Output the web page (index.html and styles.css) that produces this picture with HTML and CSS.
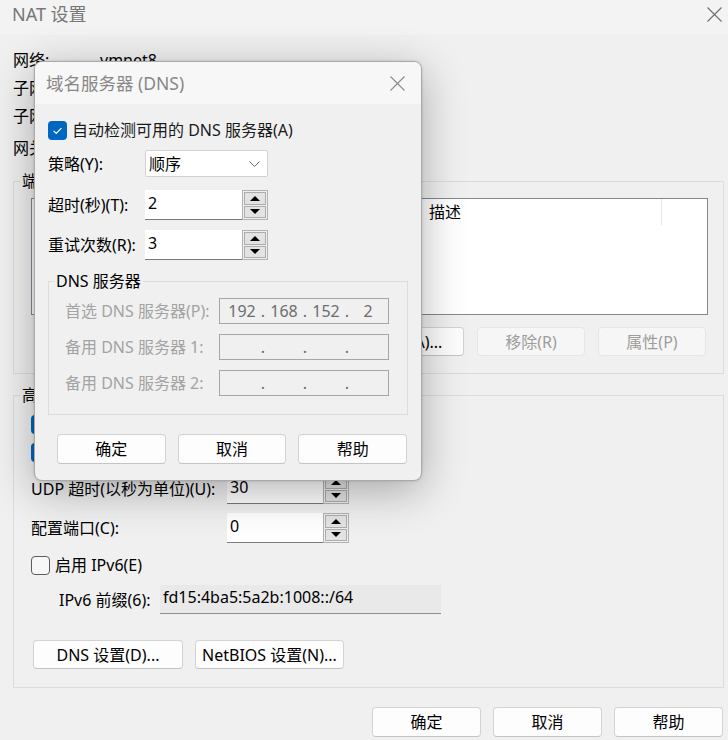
FILE: index.html
```html
<!DOCTYPE html>
<html lang="zh-CN">
<head>
    <meta charset="UTF-8">
    <meta name="viewport" content="width=device-width, initial-scale=1.0">
    <title>NAT 设置</title>
    <link rel="stylesheet" href="styles.css">
</head>
<body>
<div class="window">

    <div class="titlebar">
        <span class="title">NAT 设置</span>
        <svg class="close" width="15" height="15" viewBox="0 0 15 15">
            <path d="M0.5 0.5 L14.5 14.5 M14.5 0.5 L0.5 14.5" stroke="#6e6e6e" stroke-width="1.1" fill="none"/>
        </svg>
    </div>

    <div class="content">
        <!-- values of the lower rows sit under the DNS dialog -->
        <div class="info">
            <div class="info-row"><span class="info-label">网络:</span><span>vmnet8</span></div>
            <div class="info-row"><span class="info-label">子网 IP:</span></div>
            <div class="info-row"><span class="info-label">子网掩码:</span></div>
            <div class="info-row gap"><span class="info-label">网关 IP(G):</span></div>
        </div>

        <fieldset class="group ports">
            <legend>端口转发(F)</legend>
            <div class="list">
                <div class="list-head">
                    <span class="col col-port"></span>
                    <span class="col col-type"></span>
                    <span class="col col-ip"></span>
                    <span class="col col-desc">描述</span>
                </div>
            </div>
            <div class="btn-row">
                <button class="btn">添加(A)...</button>
                <button class="btn" disabled>移除(R)</button>
                <button class="btn" disabled>属性(P)</button>
            </div>
        </fieldset>

        <fieldset class="group advanced">
            <legend>高级</legend>
            <div class="check">
                <span class="box on"><svg width="19" height="19" viewBox="0 0 19 19"><path d="M5.6 9.9 L8.2 12.3 L13.4 7.1" stroke="#fff" stroke-width="1.2" fill="none"/></svg></span>
            </div>
            <div class="check second">
                <span class="box on"><svg width="19" height="19" viewBox="0 0 19 19"><path d="M5.6 9.9 L8.2 12.3 L13.4 7.1" stroke="#fff" stroke-width="1.2" fill="none"/></svg></span>
            </div>
            <div class="field udp">
                <span class="field-label">UDP 超时(以秒为单位)(U):</span>
                <div class="spin-edit">
                    <span class="spin-value">30</span>
                    <span class="spin"><span class="spin-btn"><i class="arrow-up"></i></span><span class="spin-btn"><i class="arrow-down"></i></span></span>
                </div>
            </div>
            <div class="field port">
                <span class="field-label">配置端口(C):</span>
                <div class="spin-edit">
                    <span class="spin-value">0</span>
                    <span class="spin"><span class="spin-btn"><i class="arrow-up"></i></span><span class="spin-btn"><i class="arrow-down"></i></span></span>
                </div>
            </div>
            <div class="check ipv6">
                <span class="box"></span>
                启用 IPv6(E)
            </div>
            <div class="field prefix">
                <span class="prefix-label">IPv6 前缀(6):</span>
                <span class="prefix-value">fd15:4ba5:5a2b:1008::/64</span>
            </div>
            <div class="setting-btns">
                <button class="btn dns-btn">DNS 设置(D)...</button>
                <button class="btn netbios-btn">NetBIOS 设置(N)...</button>
            </div>
        </fieldset>

        <div class="footer">
            <button class="btn">确定</button>
            <button class="btn">取消</button>
            <button class="btn">帮助</button>
        </div>
    </div>

    <!-- DNS dialog on top of the NAT window -->
    <div class="dialog">
        <div class="dialog-titlebar">
            <span class="dialog-title">域名服务器 (DNS)</span>
            <svg width="15" height="15" viewBox="0 0 15 15">
                <path d="M0.5 0.5 L14.5 14.5 M14.5 0.5 L0.5 14.5" stroke="#8a8a8a" stroke-width="1.1" fill="none"/>
            </svg>
        </div>
        <div class="dialog-body">
            <div class="check auto">
                <span class="box on"><svg width="19" height="19" viewBox="0 0 19 19"><path d="M5.6 9.9 L8.2 12.3 L13.4 7.1" stroke="#fff" stroke-width="1.2" fill="none"/></svg></span>
                自动检测可用的 DNS 服务器(A)
            </div>
            <div class="drow policy">
                <span class="drow-label">策略(Y):</span>
                <div class="select">
                    <span>顺序</span>
                    <svg width="11" height="6" viewBox="0 0 11 6"><path d="M0.5 0.5 L5.5 5.5 L10.5 0.5" stroke="#6a6a6a" stroke-width="1" fill="none"/></svg>
                </div>
            </div>
            <div class="drow timeout">
                <span class="drow-label">超时(秒)(T):</span>
                <div class="spin-edit">
                    <span class="spin-value">2</span>
                    <span class="spin"><span class="spin-btn"><i class="arrow-up"></i></span><span class="spin-btn"><i class="arrow-down"></i></span></span>
                </div>
            </div>
            <div class="drow retry">
                <span class="drow-label">重试次数(R):</span>
                <div class="spin-edit">
                    <span class="spin-value">3</span>
                    <span class="spin"><span class="spin-btn"><i class="arrow-up"></i></span><span class="spin-btn"><i class="arrow-down"></i></span></span>
                </div>
            </div>

            <fieldset class="group servers">
                <legend>DNS 服务器</legend>
                <div class="ip-row">
                    <span class="ip-label">首选 DNS 服务器(P):</span>
                    <span class="ip-box"><span class="seg">192</span><span class="dot">.</span><span class="seg">168</span><span class="dot">.</span><span class="seg">152</span><span class="dot">.</span><span class="seg">2</span></span>
                </div>
                <div class="ip-row">
                    <span class="ip-label">备用 DNS 服务器 1:</span>
                    <span class="ip-box"><span class="seg"></span><span class="dot">.</span><span class="seg"></span><span class="dot">.</span><span class="seg"></span><span class="dot">.</span><span class="seg"></span></span>
                </div>
                <div class="ip-row">
                    <span class="ip-label">备用 DNS 服务器 2:</span>
                    <span class="ip-box"><span class="seg"></span><span class="dot">.</span><span class="seg"></span><span class="dot">.</span><span class="seg"></span><span class="dot">.</span><span class="seg"></span></span>
                </div>
            </fieldset>

            <div class="dialog-btns">
                <button class="btn">确定</button>
                <button class="btn">取消</button>
                <button class="btn">帮助</button>
            </div>
        </div>
    </div>

</div>
</body>
</html>
```

FILE: styles.css
```css
* {
    box-sizing: border-box;
}
body {
    margin: 0;
    width: 728px;
    height: 740px;
    overflow: hidden;
    background-color: #f0f0f0;
    font-family: "Noto Sans", "Noto Sans CJK SC", sans-serif;
    font-size: 16px;
    line-height: 20px;
    color: #000;
}
.window {
    position: relative;
    height: 740px;
}

/* Main window title */
.titlebar {
    height: 35px;
    background-color: #f3f3f3;
    display: flex;
    justify-content: space-between;
    align-items: flex-start;
    padding: 4px 6px 0 12px;
}
.title {
    font-size: 18px;
    color: #777;
}
.titlebar .close {
    margin-top: 3px;
}

.content {
    padding: 11px 4px 0 13px;
}
.info-row {
    display: flex;
    align-items: center;
    height: 28px;
}
.info-row.gap {
    margin-top: 4px;
}
.info-label {
    width: 87px;
}

/* Group boxes */
.group {
    margin: 0;
    min-width: 0;
    border: 1px solid #dcdcdc;
    padding: 7px 15px 17px 17px;
}
.group legend {
    padding: 0 2px;
    margin-left: -11px;
    line-height: 20px;
}
.ports {
    margin-top: 9px;
}
.list {
    height: 117px;
    background-color: #fff;
    border: 1px solid #828790;
}
.list-head {
    display: flex;
    height: 26px;
}
.col {
    display: flex;
    align-items: center;
}
.col-port { width: 100px; }
.col-type { width: 90px; }
.col-ip { width: 207px; }
.col-desc {
    width: 233px;
    border-right: 1px solid #e5e5e5;
}
.btn-row {
    display: flex;
    justify-content: flex-end;
    gap: 13px;
    margin-top: 12px;
    padding-right: 2px;
}
.btn-row .btn {
    width: 108px;
    height: 29px;
}

/* Buttons */
.btn {
    font-family: inherit;
    font-size: 16px;
    color: #000;
    background-color: #fdfdfd;
    border: 1px solid #d3d3d3;
    border-bottom-color: #c4c4c4;
    border-radius: 4px;
    padding: 0;
    line-height: 20px;
}
.btn:disabled {
    color: #9d9d9d;
    background-color: #f6f6f6;
    border-color: #e6e6e6;
}

/* Advanced group */
.advanced {
    margin-top: 11px;
    padding-top: 9px;
    padding-bottom: 18px;
}
.check {
    display: flex;
    align-items: center;
    gap: 5px;
    height: 20px;
}
.check.second {
    margin-top: 8px;
}
.box {
    width: 19px;
    height: 19px;
    border-radius: 4px;
    border: 1px solid #5c5c5c;
    background-color: #f7f7f7;
    flex-shrink: 0;
}
.box.on {
    border: none;
    background-color: #0067c0;
}
.box svg {
    display: block;
}
.field {
    display: flex;
    align-items: center;
    height: 30px;
}
.field.udp { margin-top: 12px; }
.field.port { margin-top: 9px; }
.check.ipv6 { margin-top: 12px; }
.field.prefix {
    margin-top: 10px;
    height: 29px;
}
.field-label {
    width: 196px;
}

.spin-edit {
    display: flex;
    height: 30px;
}
.spin-value {
    width: 96px;
    height: 100%;
    background-color: #fff;
    border-bottom: 1px solid #7a7a7a;
    padding: 3px 3px 0;
}
.spin {
    width: 26px;
    height: 100%;
    border: 1px solid #b2b2b2;
    padding: 1px;
    display: grid;
    grid-template-rows: 1fr 1fr;
    gap: 1px;
}
.spin-btn {
    background-color: #e3e3e3;
    border: 1px solid #adadad;
    display: flex;
    align-items: center;
    justify-content: center;
}
.arrow-up {
    border-left: 5px solid transparent;
    border-right: 5px solid transparent;
    border-bottom: 5px solid #000;
}
.arrow-down {
    border-left: 5px solid transparent;
    border-right: 5px solid transparent;
    border-top: 5px solid #000;
}

.prefix-label {
    width: 129px;
    padding-left: 28px;
}
.prefix-value {
    width: 281px;
    height: 100%;
    background-color: #e9e9e9;
    border-bottom: 1px solid #8d8d8d;
    padding: 2px 3px 0;
}
.setting-btns {
    display: flex;
    gap: 12px;
    margin-top: 26px;
    padding-left: 2px;
}
.setting-btns .btn {
    height: 29px;
}
.dns-btn { width: 150px; }
.netbios-btn { width: 149px; }

.footer {
    display: flex;
    justify-content: flex-end;
    gap: 12px;
    margin-top: 19px;
    padding-right: 1px;
}
.footer .btn {
    width: 109px;
    height: 30px;
}

/* DNS dialog */
.dialog {
    position: absolute;
    left: 34px;
    top: 61px;
    width: 388px;
    background-color: #f0f0f0;
    border: 1px solid #a9a9a9;
    border-radius: 8px;
    overflow: hidden;
    box-shadow: 0 10px 44px rgba(0, 0, 0, 0.3), 0 0 3px rgba(0, 0, 0, 0.15);
}
.dialog-titlebar {
    height: 42px;
    background-color: #f7f7f7;
    display: flex;
    align-items: center;
    justify-content: space-between;
    padding: 0 16px 0 11px;
}
.dialog-title {
    font-size: 17.5px;
    color: #888;
}
.dialog-body {
    padding: 16px 13px 16px 13px;
}
.check.auto {
    color: #1a1a1a;
}
.drow {
    display: flex;
    align-items: center;
}
.drow-label {
    width: 97px;
}
.drow.policy { margin-top: 10px; }
.drow.timeout { margin-top: 13px; }
.drow.retry { margin-top: 10px; }
.select {
    width: 123px;
    height: 27px;
    background-color: #fff;
    border: 1px solid #d2d2d2;
    border-radius: 2px;
    display: flex;
    align-items: center;
    justify-content: space-between;
    padding: 0 7px 0 3px;
}
.drow .spin-value {
    width: 97px;
}

.servers {
    margin-top: 11px;
    padding: 7px 18px 18px 16px;
}
.ip-row {
    display: flex;
    align-items: center;
    height: 26px;
}
.ip-row + .ip-row {
    margin-top: 10px;
}
.ip-label {
    width: 154px;
    color: #a3a3a3;
}
.ip-box {
    width: 170px;
    height: 26px;
    border: 1px solid #a6a6a6;
    display: flex;
    align-items: center;
    padding-left: 5px;
    color: #6d6d6d;
}
.seg {
    width: 34px;
    text-align: center;
}
.dot {
    width: 8px;
    text-align: center;
}
.dialog-btns {
    display: flex;
    gap: 12px;
    margin-top: 19px;
    padding: 0 1px 0 9px;
}
.dialog-btns .btn {
    flex: 1;
    height: 30px;
}
```
